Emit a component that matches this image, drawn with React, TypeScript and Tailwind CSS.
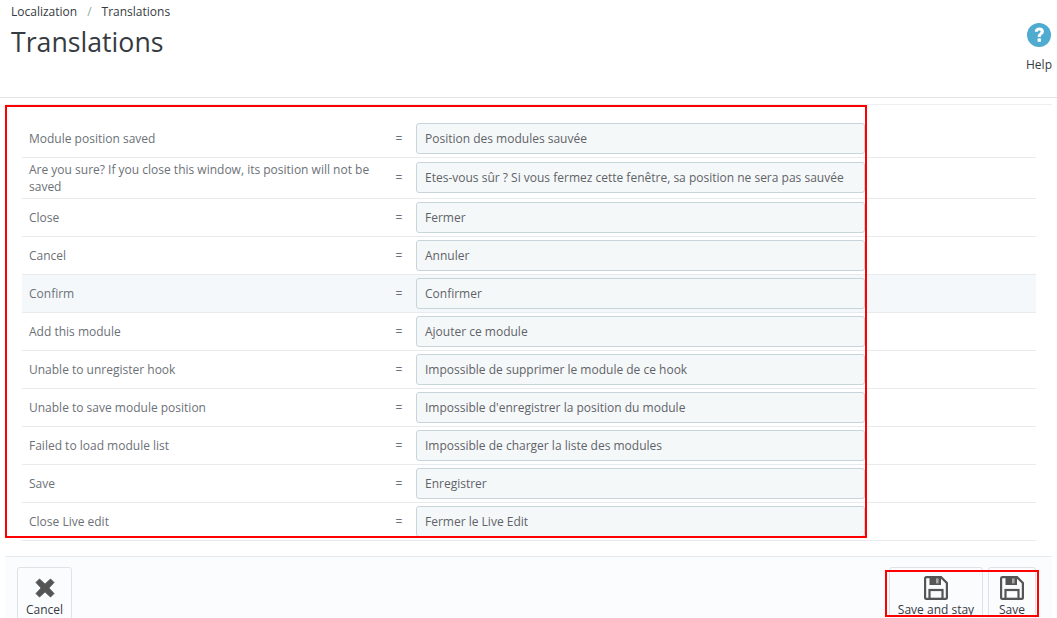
import React from "react";

const rows: [string, string][] = [
  ["Module position saved", "Position des modules sauvée"],
  ["Are you sure? If you close this window, its position will not be saved", "Etes-vous sûr ? Si vous fermez cette fenêtre, sa position ne sera pas sauvée"],
  ["Close", "Fermer"],
  ["Cancel", "Annuler"],
  ["Confirm", "Confirmer"],
  ["Add this module", "Ajouter ce module"],
  ["Unable to unregister hook", "Impossible de supprimer le module de ce hook"],
  ["Unable to save module position", "Impossible d'enregistrer la position du module"],
  ["Failed to load module list", "Impossible de charger la liste des modules"],
  ["Save", "Enregistrer"],
  ["Close Live edit", "Fermer le Live Edit"],
];

function SaveIcon() {
  return (
    <svg width="24" height="24" viewBox="0 0 24 24" className="block">
      <path d="M2.5 1.1H17L22.9 7V21.5A1.4 1.4 0 0 1 21.5 22.9H2.5A1.4 1.4 0 0 1 1.1 21.5V2.5A1.4 1.4 0 0 1 2.5 1.1Z" fill="none" stroke="#555" strokeWidth="2.2" />
      <rect x="5.5" y="1" width="11.5" height="8" fill="#555" />
      <rect x="12" y="2.4" width="2.6" height="5" fill="#a8a8a8" />
      <rect x="5.5" y="14" width="13" height="9" fill="none" stroke="#555" strokeWidth="2.2" />
    </svg>
  );
}

function ToolButton({ label, icon, className }: { label: string; icon: React.ReactNode; className: string }) {
  return (
    <div className={`h-[60px] border border-[#dfe3e6] rounded-t-[3px] flex flex-col items-center pt-[8px] text-[12px] leading-[17px] text-[#363a41] ${className}`}>
      <div className="h-[24px] mb-[1px] flex items-center">{icon}</div>
      <span>{label}</span>
    </div>
  );
}

export default function App() {
  return (
    <div className="relative w-[1057px] h-[618px] overflow-hidden bg-white text-[12px] text-[#363a41]" style={{ fontFamily: '"Open Sans", sans-serif' }}>
      <header className="h-[98px] border-b border-[#dfe3e6] pl-[11px] pr-[4px] flex justify-between">
        <div>
          <div className="h-[23px] flex items-center gap-[10px] leading-none">
            <span>Localization</span>
            <span className="text-[#8aa89a]">/</span>
            <span>Translations</span>
          </div>
          <h1 className="text-[26.7px] font-normal leading-[38px] text-[#363a41]">Translations</h1>
        </div>
        <div className="w-[28px] pt-[23px] flex flex-col items-center">
          <svg width="24" height="24" viewBox="0 0 24 24">
            <circle cx="12" cy="12" r="12" fill="#4fabcf" />
            <path d="M7.6 8.6C8 5.8 10 4.6 12.3 4.6C15 4.6 16.9 6.2 16.9 8.5C16.9 10.1 16 11 14.8 11.8C14 12.4 13.8 12.8 13.8 14H10.7C10.6 12.1 11.1 11.2 12.5 10.2C13.3 9.6 13.7 9.2 13.7 8.6C13.7 7.9 13.1 7.4 12.2 7.4C11.3 7.4 10.7 8 10.5 9Z" fill="#fff" />
            <rect x="10.6" y="15.4" width="3.3" height="3.4" fill="#fff" />
          </svg>
          <span className="mt-[9px] leading-[17px]">Help</span>
        </div>
      </header>

      <div className="ml-[5px] mr-[5px] mt-[6px] border-t border-[#eceef0] pt-[18px] pl-[17px] pr-[16px] h-[452px]">
        {rows.map(([en, fr], i) => (
          <div
            key={en}
            className={`flex border-b border-[#e8ebee] ${i === 1 ? "h-[41px] items-start" : i === 0 ? "h-[35px] items-start" : "h-[38px] items-center"} ${i === 4 ? "bg-[#f4f8fb]" : ""}`}
          >
            <div className={`w-[363px] pl-[7px] text-[#6c7177] ${i === 1 ? "leading-[17px] pt-[3px]" : "leading-[18px]"} ${i === 0 ? "pt-[7px]" : ""}`}>{en}</div>
            <div className={`w-[31px] pr-[3px] text-center text-[#6c7177] ${i === 0 ? "pt-[7px]" : ""} ${i === 1 ? "pt-[11px]" : ""}`}>=</div>
            <div className={`w-[449px] h-[31px] rounded-[3px] border border-[#c7d5da] bg-[#f5f8f9] px-[8px] leading-[29px] text-[#5f6368] whitespace-nowrap overflow-hidden ${i === 1 ? "mt-[4px]" : ""}`}>
              {fr}
            </div>
          </div>
        ))}
      </div>

      <footer className="mx-[5px] h-[62px] border-t border-[#e8ebee] bg-[#fbfcfe] pt-[10px] pl-[12px] pr-[16px] flex justify-between">
        <ToolButton
          label="Cancel"
          className="w-[55px]"
          icon={
            <svg width="20" height="20" viewBox="0 0 20 20" className="block">
              <path d="M4.5 1L10 6.2L15.5 1L19 4.5L13.8 10L19 15.5L15.5 19L10 13.8L4.5 19L1 15.5L6.2 10L1 4.5Z" fill="#555" stroke="#555" strokeWidth="1" strokeLinejoin="round" />
            </svg>
          }
        />
        <div className="flex gap-[5px]">
          <ToolButton label="Save and stay" className="w-[94px]" icon={<SaveIcon />} />
          <ToolButton label="Save" className="w-[48px]" icon={<SaveIcon />} />
        </div>
      </footer>

      <div className="absolute left-[5px] top-[105px] w-[862px] h-[433px] border-2 border-[#ff0000] pointer-events-none" />
      <div className="absolute left-[885px] top-[570px] w-[154px] h-[47px] border-2 border-[#ff0000] pointer-events-none" />
    </div>
  );
}
